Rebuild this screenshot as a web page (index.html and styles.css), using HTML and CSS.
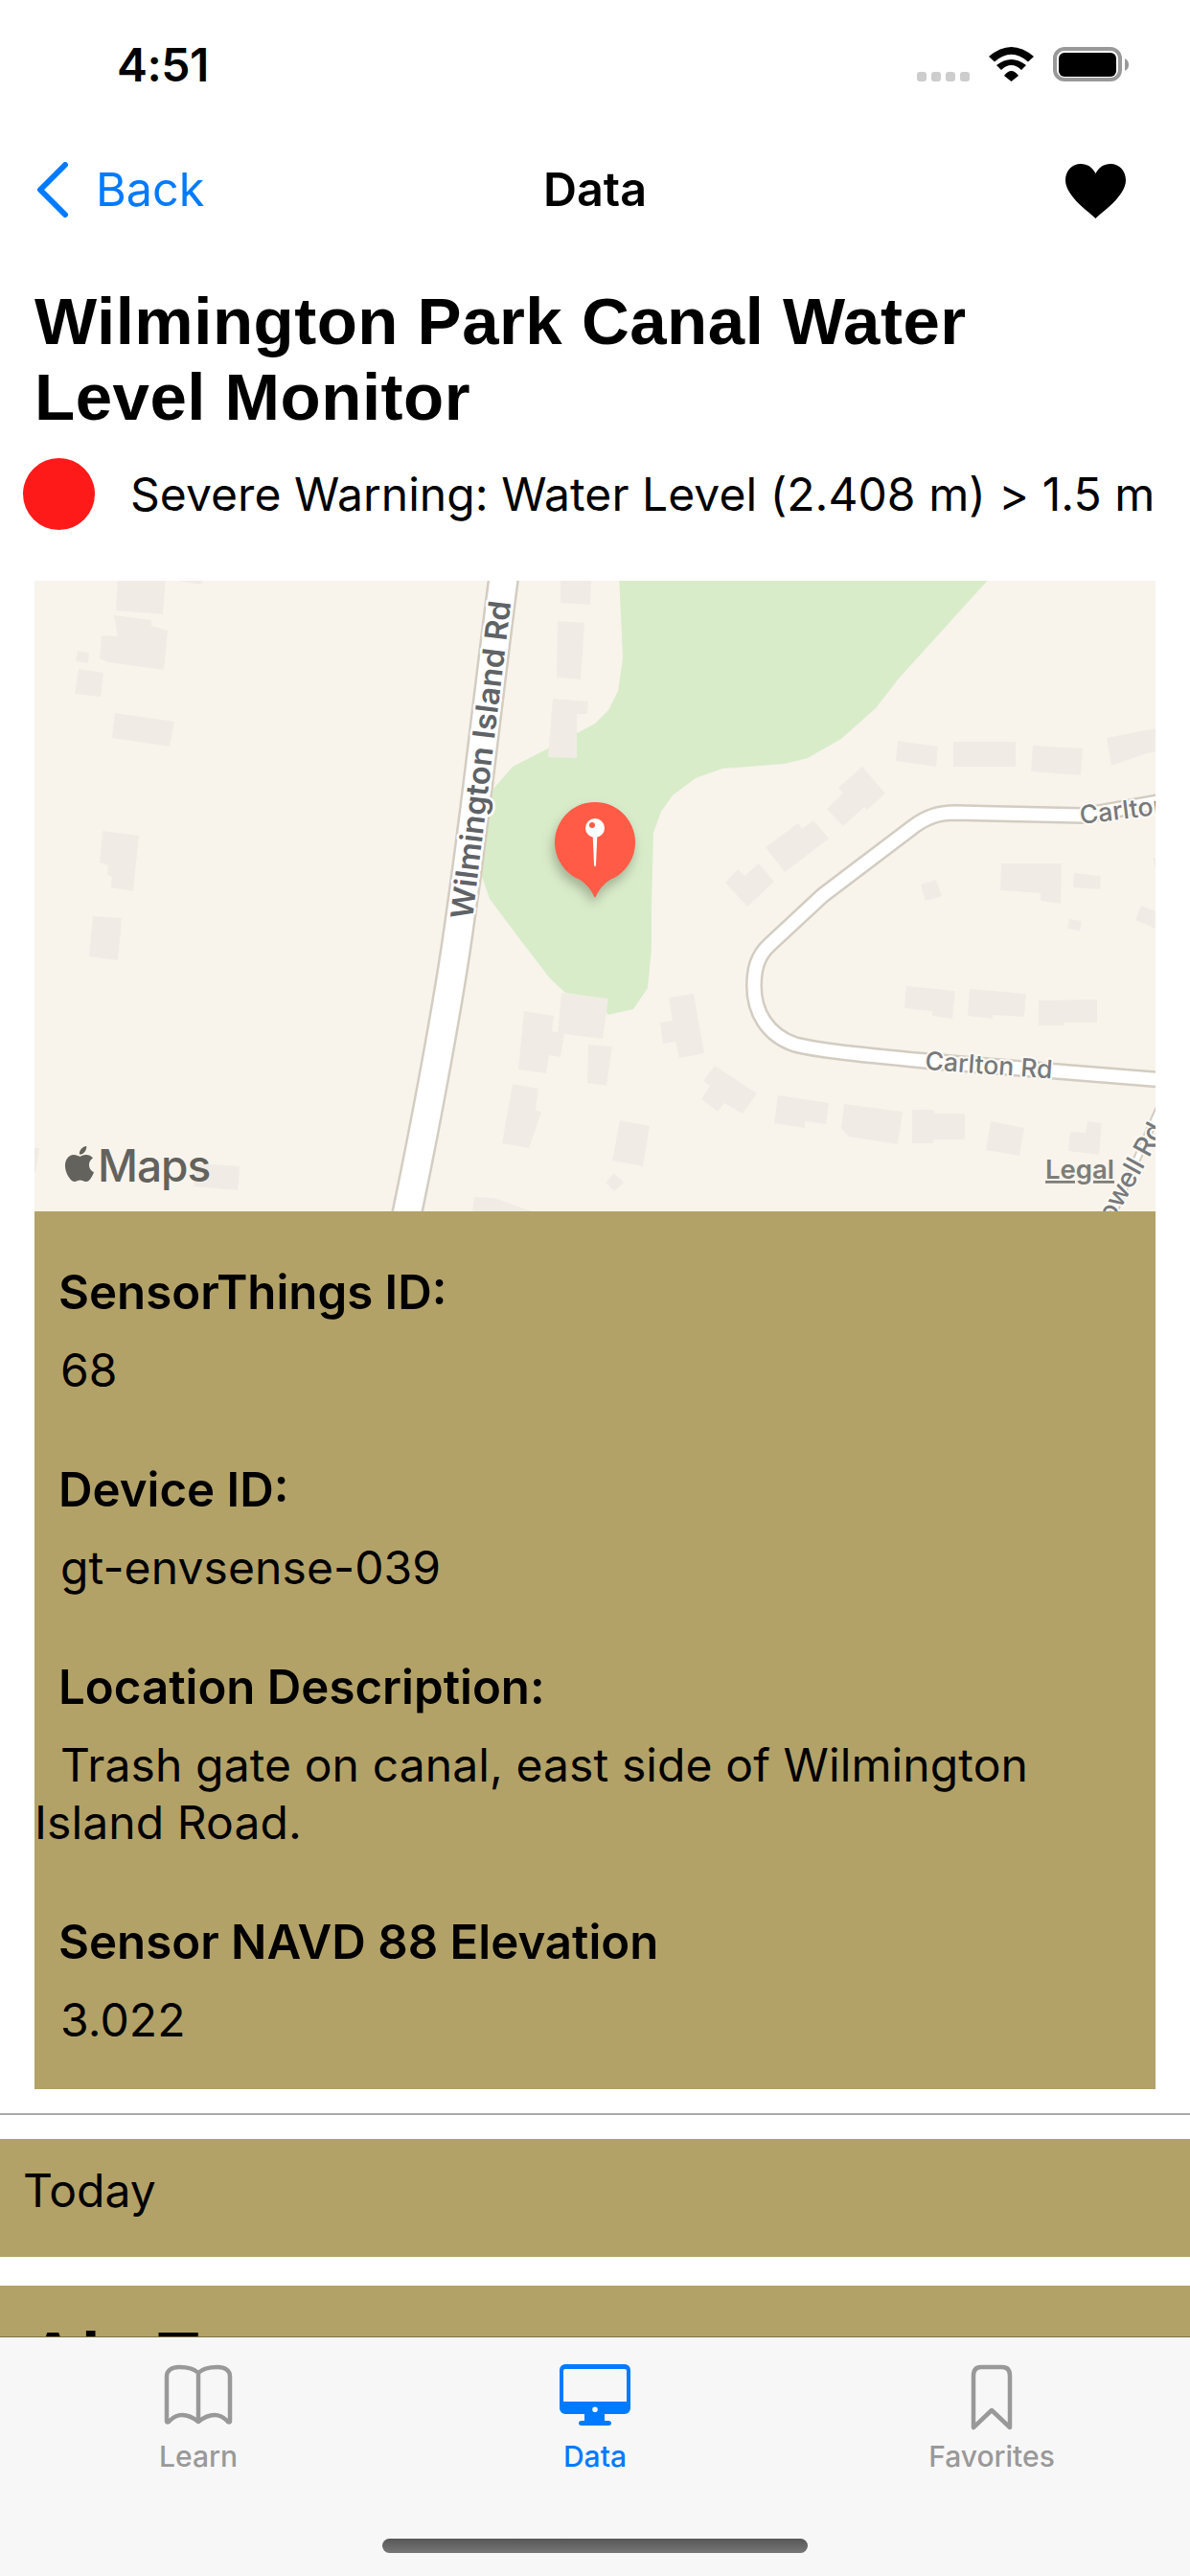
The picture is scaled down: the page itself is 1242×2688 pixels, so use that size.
FILE: index.html
```html
<!DOCTYPE html>
<html lang="en">
<head>
<meta charset="utf-8">
<title>Data</title>
<link rel="stylesheet" href="styles.css">
</head>
<body>
<div class="screen">
  <header class="status">
    <span class="time">4:51</span>
    <div class="status-icons">
      <div class="signal"><i></i><i></i><i></i><i></i></div>
      <svg class="wifi" viewBox="0 0 47 36"><path d="M0 10Q23.500 -10 47 10L41 15.500Q23.500 0 6 15.500Z"/><path d="M8 19Q23.500 7 39 19L34 24Q23.500 14 13 24Z"/><path d="M16 30Q23.500 20 31 30L23.500 36Z"/></svg>
      <svg class="battery" viewBox="0 0 79 36"><rect class="batt-frame" x="2" y="2" width="68" height="32" rx="10"/><rect x="6" y="6" width="60" height="25" rx="6"/><path class="batt-nub" d="M75 12Q79 14 79 18.500Q79 23 75 25Z"/></svg>
    </div>
  </header>

  <nav class="nav">
    <a class="back">
      <svg class="chevron" viewBox="0 0 34 58"><path d="M30 3L4 29L30 55"/></svg>
      <span>Back</span>
    </a>
    <span class="nav-title">Data</span>
    <svg class="heart" viewBox="0 0 63 57"><path d="M31.500 57C26 51 0 34 0 17C0 7 7 0 16 0C23 0 28 3.500 31.500 10C35 3.500 40 0 47 0C56 0 63 7 63 17C63 34 37 51 31.500 57Z"/></svg>
  </nav>

  <h1 class="title">Wilmington Park Canal Water<br>Level Monitor</h1>

  <div class="alert">
    <span class="alert-dot"></span>
    <span class="alert-text">Severe Warning: Water Level (2.408 m) &gt; 1.5 m</span>
  </div>

  <svg class="map" viewBox="36 606 1170 658">
    <rect class="land" x="36" y="606" width="1170" height="658"/>
    <path class="park" d="M621 755L635 741L645 721L650 687L646 600L1036 600L938 708L914 739L878 771L843 791L819 797L754 802L726 812L702 830L690 847L682 869L680 947L680 990L676 1031L661 1053L635 1059L621 1041L590 1036L574 1021L547 986L511 938L502 912L503 882L515 823L535 800L570 782Z"/>
    <g class="buildings">
      <polygon points="123,600 173,600 170,641 121,637"/>
      <polygon points="119,642 158,647 158,653 175,658 171,699 113,691 104,687 106,663 123,664"/>
      <polygon points="81,679 93,681 92,692 79,690"/>
      <polygon points="82,698 108,702 105,727 78,724"/>
      <polygon points="120,744 182,753 177,779 117,770"/>
      <polygon points="107,867 145,872 139,930 116,926 117,915 112,913 113,903 104,900"/>
      <polygon points="97,956 127,958 123,1002 93,998"/>
      <polygon points="206,1214 250,1217 248,1242 202,1238"/>
      <polygon points="36,1198 41,1198 38,1220 36,1224"/>
      <polygon points="186,606 212,606 210,610"/>
      <polygon points="585,600 617,600 616,631 585,629"/>
      <polygon points="582,648 610,650 606,709 581,707"/>
      <polygon points="577,729 614,732 613,745 602,745 602,791 572,790"/>
      <polygon points="586,1036 635,1042 629,1084 582,1078"/>
      <polygon points="547,1055 578,1060 576,1076 589,1079 585,1103 573,1101 570,1120 541,1116"/>
      <polygon points="535,1131 562,1136 559,1159 565,1160 552,1198 524,1193"/>
      <polygon points="614,1090 639,1092 633,1133 613,1130"/>
      <polygon points="495,1249 515,1250 558,1265 493,1265"/>
      <polygon points="937,773 979,779 977,800 935,794"/>
      <polygon points="995,774 1060,774 1060,800 995,800"/>
      <polygon points="1078,778 1130,781 1128,809 1076,805"/>
      <polygon points="1155,770 1206,760 1206,784 1194,787 1160,799"/>
      <polygon points="900,800 924,828 905,845 902,842 880,862 863,844 880,828 875,822"/>
      <polygon points="833,859 837,865 849,856 865,875 819,910 799,884"/>
      <polygon points="770,907 777,914 792,901 808,920 780,946 757,921"/>
      <polygon points="1045,901 1108,901 1107,943 1086,940 1086,932 1044,929"/>
      <polygon points="1121,911 1149,914 1148,928 1120,926"/>
      <polygon points="961,923 977,918 983,935 966,940"/>
      <polygon points="1116,959 1129,961 1127,971 1114,969"/>
      <polygon points="1191,945 1206,951 1206,969 1185,960"/>
      <polygon points="1203,895 1206,895 1206,906"/>
      <polygon points="946,1029 997,1034 994,1063 973,1060 973,1055 944,1052"/>
      <polygon points="1012,1032 1071,1037 1069,1061 1036,1059 1036,1063 1010,1060"/>
      <polygon points="1084,1044 1145,1043 1145,1067 1111,1067 1111,1070 1084,1070"/>
      <polygon points="698,1041 724,1037 735,1099 709,1104 705,1087 692,1089 689,1067 702,1065"/>
      <polygon points="746,1112 790,1141 775,1162 756,1151 749,1160 732,1147 741,1133 734,1128"/>
      <polygon points="812,1143 865,1151 862,1173 840,1170 840,1177 808,1172"/>
      <polygon points="881,1152 942,1160 937,1194 886,1186 878,1177"/>
      <polygon points="952,1158 975,1158 975,1162 1007,1162 1007,1189 974,1189 974,1193 952,1193"/>
      <polygon points="1034,1170 1069,1177 1064,1206 1029,1200"/>
      <polygon points="1135,1170 1150,1172 1147,1205 1115,1201 1117,1181 1133,1182"/>
      <polygon points="647,1169 678,1175 671,1217 639,1211"/>
      <polygon points="641,1224 651,1234 641,1243 632,1234"/>
    </g>
    <path class="road-case road-main" d="M526 600C510 720 495 860 480 960C470 1035 445 1170 424 1270"/>
    <path class="road-fill road-main-fill" d="M526 600C510 720 495 860 480 960C470 1035 445 1170 424 1270"/>
    <path class="road-case road-side" d="M1215 836L1130 851L997 848C980 848 968 852 954 862L859 934L803 986C790 998 787 1012 787 1029C787 1055 800 1080 830 1090C850 1095 880 1099 966 1107L1215 1127"/>
    <path class="road-fill road-side-fill" d="M1215 836L1130 851L997 848C980 848 968 852 954 862L859 934L803 986C790 998 787 1012 787 1029C787 1055 800 1080 830 1090C850 1095 880 1099 966 1107L1215 1127"/>
    <path class="road-case road-lane" d="M1215 1145L1160 1270"/>
    <path class="road-fill road-lane-fill" d="M1215 1145L1160 1270"/>
    <text class="label label-main" transform="translate(493 960) rotate(-83.100)" textLength="334" lengthAdjust="spacingAndGlyphs">Wilmington Island Rd</text>
    <text class="label label-side" transform="translate(965 1116) rotate(4)">Carlton Rd</text>
    <text class="label label-side" transform="translate(1128 860) rotate(-7)">Carlton Rd</text>
    <text class="label label-lane" transform="translate(1216 1178) rotate(-61)" text-anchor="end">Powell Rd</text>
    <g class="pin">
      <path class="pin-body" d="M621 937Q627 924 637 917.800A42 42 0 1 0 605 917.800Q615 924 621 937Z"/>
      <path class="pin-stem" d="M618.500 868L623.500 868L622 902Q621 907 620 902Z"/>
      <circle class="pin-stem" cx="621" cy="864" r="10"/>
      <circle class="pin-dot" cx="618" cy="861" r="3"/>
    </g>
    <path class="maps-apple" transform="translate(60.800 1192.300) scale(1.850)" d="M18.710 19.500c-.83 1.240-1.710 2.450-3.050 2.470-1.340.03-1.770-.79-3.290-.79-1.530 0-2 .77-3.270.82-1.310.05-2.300-1.320-3.140-2.530C4.250 17 2.940 12.450 4.700 9.390c.87-1.520 2.430-2.480 4.120-2.510 1.280-.02 2.500.87 3.290.87.78 0 2.260-1.070 3.810-.91.65.03 2.470.26 3.640 1.980-.09.06-2.170 1.280-2.150 3.810.03 3.020 2.650 4.030 2.680 4.040-.03.07-.42 1.440-1.380 2.830M13 3.500c.73-.83 1.940-1.460 2.940-1.500.13 1.170-.34 2.350-1.040 3.190-.69.85-1.830 1.510-2.950 1.420-.15-1.150.41-2.350 1.050-3.110z"/>
    <text class="maps-word" x="102" y="1233">Maps</text>
    <text class="maps-legal" x="1091" y="1230">Legal</text>
  </svg>

  <section class="card">
    <div class="item">
      <h2 class="item-label">SensorThings ID:</h2>
      <p class="item-value">68</p>
    </div>
    <div class="item">
      <h2 class="item-label">Device ID:</h2>
      <p class="item-value">gt-envsense-039</p>
    </div>
    <div class="item">
      <h2 class="item-label">Location Description:</h2>
      <p class="item-value">Trash gate on canal, east side of Wilmington Island Road.</p>
    </div>
    <div class="item">
      <h2 class="item-label">Sensor NAVD 88 Elevation</h2>
      <p class="item-value">3.022</p>
    </div>
  </section>

  <hr class="divider">

  <div class="band band-today">Today</div>
  <div class="band band-next">Air Temp</div>

  <footer class="tabbar">
    <div class="tabs">
      <div class="tab">
        <svg class="tab-icon" viewBox="0 0 76 70"><path class="tab-line" d="M38 9C33 4 25 3 18 3C11 3 5 6 5 13V59C5 61 7 61 8 59C12 55 17 53 21 53C28 53 33 56 38 60C43 56 48 53 55 53C59 53 64 55 68 59C69 61 71 61 71 59V13C71 6 65 3 58 3C51 3 43 4 38 9V60"/></svg>
        <span class="tab-label">Learn</span>
      </div>
      <div class="tab tab-active">
        <svg class="tab-icon" viewBox="0 0 76 70"><path class="tab-solid" fill-rule="evenodd" d="M7 0H69A6 6 0 0 1 75 6V46A6 6 0 0 1 69 52H48V59H52Q55 59 55 61.500Q55 64 52 64H24Q21 64 21 61.500Q21 59 24 59H27V52H7A6 6 0 0 1 1 46V6A6 6 0 0 1 7 0ZM7 5A2 2 0 0 0 5 7V39H71V7A2 2 0 0 0 69 5ZM38 44.500A2.800 2.800 0 1 0 38 50.100A2.800 2.800 0 1 0 38 44.500Z"/></svg>
        <span class="tab-label">Data</span>
      </div>
      <div class="tab">
        <svg class="tab-icon" viewBox="0 0 76 70"><path class="tab-line" d="M19 12Q19 3 27 3H49Q57 3 57 12V66L38 48L19 66Z"/></svg>
        <span class="tab-label">Favorites</span>
      </div>
    </div>
    <div class="home-indicator"></div>
  </footer>
</div>
</body>
</html>
```

FILE: styles.css
```css
* { box-sizing: border-box; }
html, body { margin: 0; padding: 0; background: #fff; }
.screen {
  position: relative;
  width: 1242px;
  height: 2688px;
  overflow: hidden;
  background: #fff;
  color: #000;
  font-family: Inter, "Liberation Sans", sans-serif;
}

/* status bar */
.status { display: flex; height: 132px; padding: 0 64px 0 122px; }
.time { margin-top: 38px; font-size: 48px; font-weight: 600; line-height: 60px; letter-spacing: -.5px; }
.status-icons { display: flex; align-items: flex-start; gap: 20px; margin-left: auto; padding-top: 49px; }
.signal { display: flex; gap: 5px; margin-top: 26px; }
.signal i { width: 10px; height: 10px; border-radius: 3px; background: #cdcdcd; }
.wifi { width: 47px; height: 36px; }
.battery { width: 79px; height: 36px; }
.batt-frame { fill: none; stroke: #999; stroke-width: 4; }
.batt-nub { fill: #999; }

/* nav bar */
.nav {
  display: grid;
  grid-template-columns: 1fr auto 1fr;
  align-items: center;
  height: 132px;
  padding: 0 36px;
  line-height: 132px;
  font-size: 48.500px;
}
.back { display: flex; align-items: center; gap: 28px; padding-left: 2px; color: #007aff; }
.chevron { width: 34px; height: 58px; fill: none; stroke: #007aff; stroke-width: 6; stroke-linecap: round; stroke-linejoin: round; }
.nav-title { font-weight: 600; }
.heart { justify-self: end; width: 63px; height: 57px; margin: 2px 31px 0 0; }

/* heading */
.title {
  margin: 0;
  padding: 32px 36px 0;
  font-family: "Liberation Sans", Arial, sans-serif;
  font-size: 69px;
  font-weight: 700;
  line-height: 79px;
  letter-spacing: .5px;
}

/* alert */
.alert { display: flex; align-items: center; gap: 37px; height: 75px; margin-top: 24px; padding-left: 24px; }
.alert-dot { flex: none; width: 75px; height: 75px; border-radius: 50%; background: #ff1a1a; }
.alert-text { font-size: 48px; white-space: nowrap; letter-spacing: .05px; }

/* map */
.map { display: block; width: 1170px; height: 658px; margin: 53px 0 0 36px; }
.land { fill: #f8f4ec; }
.park { fill: #d9ecca; }
.buildings polygon { fill: #f0ece5; }
.road-case, .road-fill { fill: none; }
.road-case { stroke: #d3ccc1; }
.road-fill { stroke: #fff; }
.road-main { stroke-width: 33px; }
.road-main-fill { stroke-width: 28px; }
.road-side { stroke-width: 18px; }
.road-side-fill { stroke-width: 13px; }
.road-lane { stroke-width: 9px; }
.road-lane-fill { stroke-width: 5px; }
.label {
  font-family: Inter, "Liberation Sans", sans-serif;
  paint-order: stroke;
  stroke-linejoin: round;
}
.label-main { font-size: 32px; font-weight: 600; fill: #5f6366; stroke: #fff; stroke-width: 5px; }
.label-side { font-size: 26.500px; font-weight: 500; fill: #77797b; stroke: #fbf9f4; stroke-width: 4px; }
.label-lane { font-size: 28px; font-weight: 500; fill: #77797b; stroke: #fbf9f4; stroke-width: 4px; }
.pin { filter: drop-shadow(-2px 7px 6px rgba(60, 70, 50, .35)); }
.pin-body { fill: #ff5b47; }
.pin-stem { fill: #fff; }
.pin-dot { fill: #ff5b47; }
.maps-apple { fill: #63625d; }
.maps-word { font-size: 46px; font-weight: 500; letter-spacing: -1px; fill: #63625d; }
.maps-legal { font-size: 27.500px; font-weight: 600; fill: #7d7d78; text-decoration: underline; }

/* info card */
.card { margin: 0 36px; padding: 54px 0 42px; background: #b3a268; }
.item + .item { margin-top: 64px; }
.item-label { margin: 0 0 22px; padding: 0 25px; font-size: 49.200px; font-weight: 600; line-height: 60px; }
.item-value { margin: 0; font-size: 48px; line-height: 60px; text-indent: 27px; letter-spacing: .1px; }

.divider { height: 2px; margin: 25px 0 0; border: 0; background: #a9a9a9; }

/* section bands */
.band { background: #b3a268; }
.band-today { height: 123px; margin-top: 25px; padding: 24px 24px 0; font-size: 48px; line-height: 60px; }
.band-next {
  height: 300px;
  margin-top: 30px;
  padding: 35px 30px 0;
  font-family: "Liberation Sans", Arial, sans-serif;
  font-size: 70px;
  font-weight: 700;
  line-height: 79px;
  letter-spacing: 4.500px;
}

/* tab bar (floats over the scrolled content) */
.tabbar {
  position: absolute;
  left: 0;
  right: 0;
  bottom: 0;
  display: flex;
  flex-direction: column;
  height: 250px;
  border-top: 1px solid #7d7146;
  background: #f7f7f7;
}
.tabs { display: grid; grid-template-columns: repeat(3, 414px); padding-top: 28px; }
.tab { display: flex; flex-direction: column; align-items: center; color: #999; }
.tab-active { color: #007aff; }
.tab-icon { width: 76px; height: 70px; }
.tab-line { fill: none; stroke: #999; stroke-width: 4.500; stroke-linejoin: round; stroke-linecap: round; }
.tab-solid { fill: #007aff; }
.tab-label { margin-top: 8px; font-size: 30px; font-weight: 500; line-height: 36px; }
.home-indicator {
  width: 444px;
  height: 15px;
  margin: auto auto 24px;
  border-radius: 8px;
  background: linear-gradient(#575757, #767676);
}
```
